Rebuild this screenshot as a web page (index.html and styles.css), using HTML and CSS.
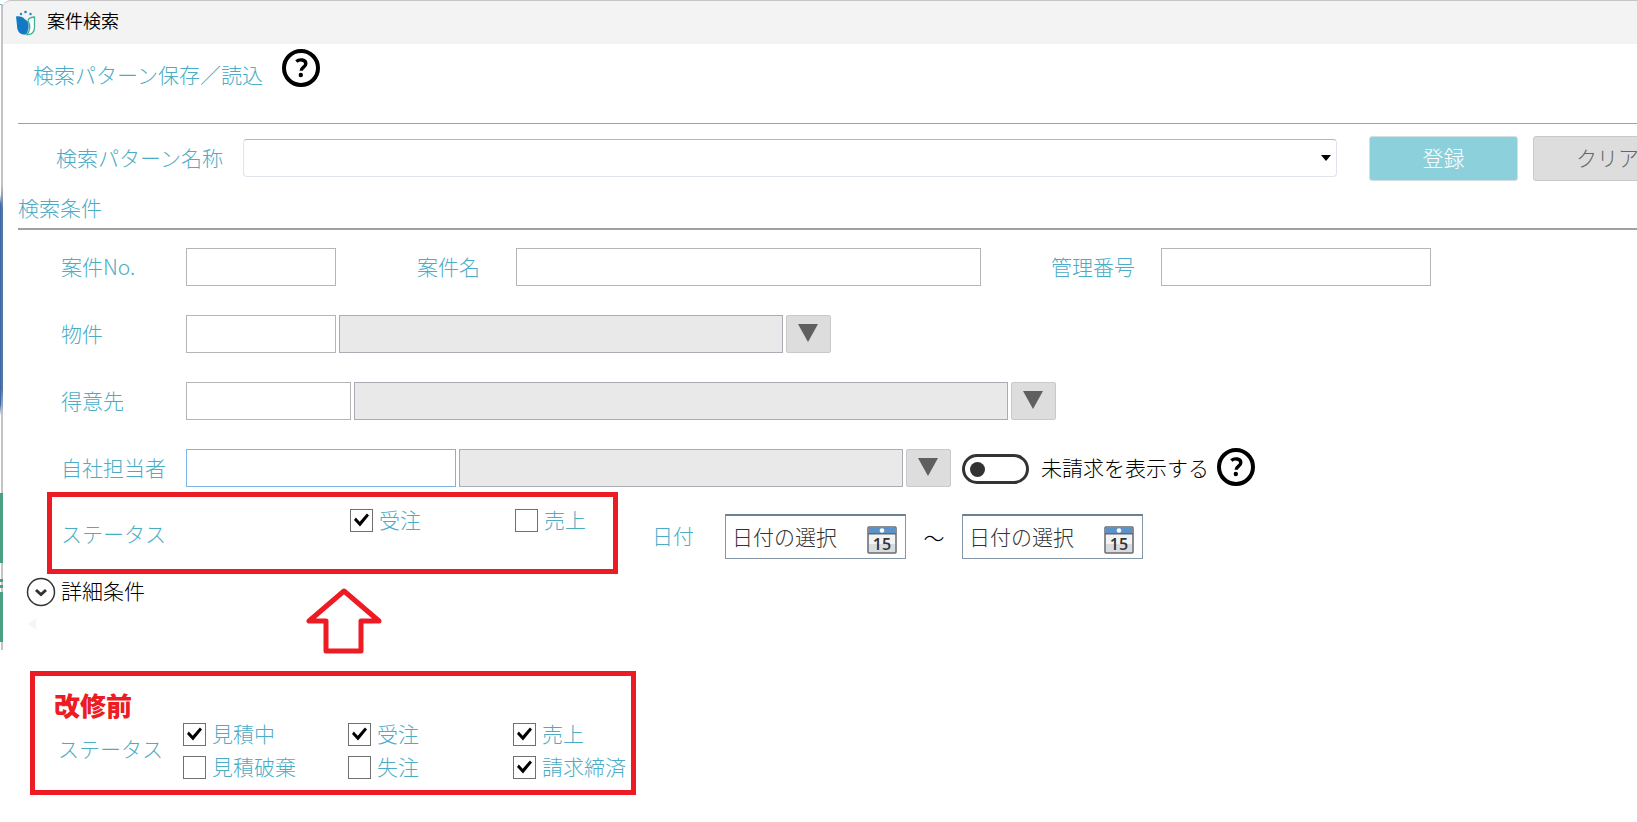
FILE: index.html
```
<!DOCTYPE html>
<html lang="ja">
<head>
  <meta charset="UTF-8">
  <title>案件検索</title>
  <link rel="stylesheet" href="styles.css">
</head>
<body>
  <svg class="defs">
    <symbol id="help" viewBox="0 0 38 38">
      <circle cx="19" cy="19" r="17" fill="#fff" stroke="#000" stroke-width="4"/>
      <path d="M14.300 12.500c3.400-2.800 9.500-1.900 9.500 2.200 0 3.300-4.600 3.500-4.600 7.100" fill="none" stroke="#000" stroke-width="3.400"/>
      <circle cx="18.800" cy="26" r="2.200" fill="#000"/>
    </symbol>
    <symbol id="calendar" viewBox="0 0 30 28">
      <rect x="1" y="1" width="28" height="26" rx="1" fill="#f1f3f4" stroke="#66696c" stroke-width="1.500"/>
      <rect x="2" y="18" width="26" height="8" fill="#d9dcdf"/>
      <rect x="2" y="2" width="26" height="5" fill="#5b93c9"/>
      <rect x="1" y="7" width="28" height="1.500" fill="#66696c"/>
      <circle cx="15" cy="4.500" r="2.300" fill="#fff"/>
      <text x="15" y="24" text-anchor="middle" class="calendar-day">15</text>
    </symbol>
    <symbol id="down" viewBox="0 0 20 18">
      <path d="M0 0h20L10 18z" fill="#5f5f5f"/>
    </symbol>
  </svg>

  <div class="edge"></div>

  <div class="window">
    <header class="titlebar">
      <svg class="logo" width="20" height="26" viewBox="0 0 20 26">
        <circle cx="5" cy="4" r="1.200" fill="#2083c4"/>
        <circle cx="9.500" cy="2" r="1.300" fill="#2083c4"/>
        <circle cx="14.500" cy="4" r="1.200" fill="#2083c4"/>
        <path d="M18.500 7c-4 .3-6.500 2-6.500 4 3 4 2 10-1 13.500 5 .5 7.500-2.500 7.500-7.500z" fill="#fff" stroke="#3cb392" stroke-width="1.300"/>
        <path d="M0 6.500c4-.5 7 .5 8.500 2.500 4.500 2 6 9 1.500 15.500-6 .5-9-3-9-9z" fill="#1479c3"/>
      </svg>
      <h1 class="title">案件検索</h1>
    </header>

    <div class="pattern-head">
      <h2 class="heading">検索パターン保存／読込</h2>
      <button class="help" aria-label="ヘルプ"><svg width="38" height="38"><use href="#help"/></svg></button>
    </div>

    <div class="pattern-row">
      <label for="pattern">検索パターン名称</label>
      <div class="combo">
        <select id="pattern"><option></option></select>
        <svg class="combo-arrow" width="10" height="6" viewBox="0 0 10 6"><path d="M0 0h10L5 6z"/></svg>
      </div>
      <button class="btn btn-primary">登録</button>
      <button class="btn">クリア</button>
    </div>

    <h2 class="heading heading-cond">検索条件</h2>

    <form class="conditions">
      <div class="row">
        <label class="name" for="no">案件No.</label>
        <input class="w-s" type="text" id="no">
        <label class="name name-matter" for="matter">案件名</label>
        <input class="w-l" type="text" id="matter">
        <label class="name name-control" for="control">管理番号</label>
        <input class="w-m" type="text" id="control">
      </div>
      <div class="row">
        <label class="name" for="property">物件</label>
        <input class="w-s" type="text" id="property">
        <input class="w-ref" type="text" aria-label="物件名" readonly>
        <button type="button" class="pick" aria-label="物件を選択"><svg width="20" height="18"><use href="#down"/></svg></button>
      </div>
      <div class="row">
        <label class="name" for="client">得意先</label>
        <input class="w-c" type="text" id="client">
        <input class="w-xl" type="text" aria-label="得意先名" readonly>
        <button type="button" class="pick" aria-label="得意先を選択"><svg width="20" height="18"><use href="#down"/></svg></button>
      </div>
      <div class="row">
        <label class="name" for="staff">自社担当者</label>
        <input class="w-m active" type="text" id="staff">
        <input class="w-ref" type="text" aria-label="担当者名" readonly>
        <button type="button" class="pick" aria-label="担当者を選択"><svg width="20" height="18"><use href="#down"/></svg></button>
        <label class="switch"><input type="checkbox" class="toggle">未請求を表示する</label>
        <button type="button" class="help" aria-label="ヘルプ"><svg width="38" height="38"><use href="#help"/></svg></button>
      </div>
    </form>

    <div class="status-row">
      <div class="status-now">
        <span class="status-label">ステータス</span>
        <label class="check"><input type="checkbox" checked>受注</label>
        <label class="check"><input type="checkbox">売上</label>
      </div>
      <div class="dates">
        <label class="date-label" for="from">日付</label>
        <div class="date">
          <input type="text" id="from" placeholder="日付の選択">
          <button aria-label="カレンダー"><svg width="30" height="28"><use href="#calendar"/></svg></button>
        </div>
        <span class="tilde">～</span>
        <div class="date">
          <input type="text" aria-label="日付(終了)" placeholder="日付の選択">
          <button aria-label="カレンダー"><svg width="30" height="28"><use href="#calendar"/></svg></button>
        </div>
      </div>
    </div>

    <div class="detail-row">
      <div>
        <button class="detail">
          <svg width="30" height="30" viewBox="0 0 30 30" fill="none" stroke="#333">
            <circle cx="15" cy="15" r="13.500" stroke-width="1.500"/>
            <path d="M10 13l5 4.500 5-4.500" stroke-width="3"/>
          </svg>
          <span>詳細条件</span>
        </button>
        <svg class="scroll-left" width="8" height="12" viewBox="0 0 8 12"><path d="M8 0v12L0 6z" fill="#f5f5f5"/></svg>
      </div>
      <svg class="arrow-up" width="76" height="66" viewBox="0 0 76 66">
        <path d="M38 3L3 33h17v30h35V33h18z" fill="#fff" stroke="#ed1c24" stroke-width="5" stroke-linejoin="round"/>
      </svg>
    </div>

    <section class="before">
      <h2 class="before-title">改修前</h2>
      <div class="before-body">
        <span class="before-label">ステータス</span>
        <div class="checks">
          <label class="check"><input type="checkbox" checked>見積中</label>
          <label class="check"><input type="checkbox" checked>受注</label>
          <label class="check"><input type="checkbox" checked>売上</label>
          <label class="check"><input type="checkbox">見積破棄</label>
          <label class="check"><input type="checkbox">失注</label>
          <label class="check"><input type="checkbox" checked>請求締済</label>
        </div>
      </div>
    </section>
  </div>
</body>
</html>
```
FILE: styles.css
```
* {
  box-sizing: border-box;
}
body {
  margin: 0;
  position: relative;
  overflow: hidden;
  background: #fff;
  color: #4bacc6;
  font: 300 21px/30px "Noto Sans CJK JP", sans-serif;
}
h1, h2 {
  margin: 0;
  font-size: inherit;
  font-weight: inherit;
}
button, input, select {
  margin: 0;
  padding: 0;
  font: inherit;
  color: inherit;
  border: 0;
  background: none;
}
svg {
  display: block;
  flex: none;
}
.defs {
  display: none;
}
.calendar-day {
  font: 600 16px "Open Sans", sans-serif;
  fill: #333;
}

/* 背後のウィンドウが見える左端 */
.edge {
  position: absolute;
  top: 4px;
  left: 0;
  width: 3px;
  height: 646px;
  background: linear-gradient(#4bacc6 1px, #fff 1px 190px, #3a68a8 200px 400px, #fff 412px 489px, #4a9f80 489px 559px, #fff 559px 575px, #4a9f80 575px 578px, #fff 578px 581px, #4a9f80 581px 584px, #fff 584px 588px, #4a9f80 588px 638px, #fff 638px);
}
.edge::after {
  content: "";
  position: absolute;
  top: 0;
  left: 1px;
  width: 2px;
  height: 646px;
  background: linear-gradient(#c4c4c4 180px, #56759f 205px 385px, #c4c4c4 410px 489px, #4a9f80 489px 559px, #c4c4c4 559px 575px, #4a9f80 575px 578px, #c4c4c4 578px 581px, #4a9f80 581px 584px, #c4c4c4 584px 588px, #4a9f80 588px 638px, #c4c4c4 638px);
}

.window {
  position: relative;
  margin-left: 3px;
}
.titlebar {
  display: flex;
  align-items: center;
  height: 44px;
  padding: 0 13px;
  gap: 11px;
  border-top: 1px solid #c4c4c4;
  border-top-left-radius: 8px;
  background: #f3f3f3;
}
.title {
  padding-bottom: 5px;
  color: #000;
  font-size: 18px;
  font-weight: 350;
}

.pattern-head {
  display: flex;
  align-items: flex-start;
  gap: 19px;
  height: 80px;
  margin-left: 15px;
  padding: 5px 0 0 15px;
  border-bottom: 1px solid #a0a0a0;
}
.pattern-head .heading {
  padding-top: 10px;
}
.pattern-row {
  display: flex;
  align-items: center;
  height: 68px;
  margin: 0 -45px 0 53px;
}
.pattern-row label {
  padding-bottom: 3px;
}
.combo {
  position: relative;
  flex: 1;
  margin: 0 32px 0 20px;
}
.combo select {
  display: block;
  width: 100%;
  height: 38px;
  appearance: none;
  border: 1px solid #dfe3ec;
  border-top-color: #b4b4bc;
  border-radius: 4px;
  background: #fff;
}
.combo-arrow {
  position: absolute;
  top: 16px;
  right: 6px;
}
.btn {
  width: 149px;
  height: 45px;
  margin-right: 15px;
  padding-bottom: 3px;
  border: 1px solid #c9c9c9;
  border-radius: 3px;
  background: #ddd;
  color: #666;
}
.btn:last-child {
  margin-right: 0;
}
.btn-primary {
  border-color: #d3dfe2;
  background: #8bd0db;
  color: #fff;
}
.heading-cond {
  height: 38px;
  margin-left: 15px;
  border-bottom: 2px solid #a0a0a0;
}

.conditions {
  display: flex;
  flex-direction: column;
  gap: 29px;
  padding: 18px 0 0 58px;
}
.row {
  display: flex;
  align-items: center;
  gap: 3px;
  height: 38px;
}
.row input[type="text"] {
  height: 38px;
  border: 1px solid #b5b5b5;
  background: #fff;
}
.row input[readonly] {
  border-color: #ababb3;
  background: #e9e9e9;
}
.row input.active {
  border-color: #7eb4ea;
}
.name {
  width: 122px;
  padding-bottom: 3px;
}
.name-matter {
  width: 96px;
  margin-left: 78px;
}
.name-control {
  width: 107px;
  margin-left: 67px;
}
.w-s { width: 150px; }
.w-c { width: 165px; }
.w-m { width: 270px; }
.w-ref { width: 444px; }
.w-l { width: 465px; }
.w-xl { width: 654px; }
.pick {
  display: flex;
  justify-content: center;
  width: 45px;
  height: 38px;
  padding: 8px 2px 0 0;
  border: 1px solid #c9c9c9;
  border-radius: 2px;
  background: #ddd;
}
.switch {
  display: flex;
  align-items: center;
  gap: 12px;
  margin: 0 5px 0 8px;
  padding-bottom: 2px;
  color: #000;
}
.toggle {
  width: 67px;
  height: 30px;
  margin-top: 3px;
  padding: 5px;
  appearance: none;
  border: 3px solid #333;
  border-radius: 15px;
}
.toggle::before {
  content: "";
  display: block;
  width: 15px;
  height: 15px;
  border-radius: 50%;
  background: #333;
}
.row .help {
  padding-bottom: 2px;
}

.status-row {
  display: flex;
  align-items: flex-start;
  margin: 5px 0 0 44px;
}
.status-now {
  display: flex;
  width: 571px;
  height: 82px;
  padding-left: 9px;
  border: 5px solid #ed1c24;
}
.status-label {
  flex: none;
  width: 289px;
  padding-top: 21px;
}
.status-now .check {
  flex: none;
  width: 165px;
  margin-top: 7px;
}
.check {
  display: flex;
  align-items: center;
  gap: 6px;
  height: 30px;
}
.check input {
  width: 23px;
  height: 23px;
  margin-top: 2px;
  padding: 3px;
  appearance: none;
  border: 1px solid #707070;
  background: #fff;
}
.check input:checked::before {
  content: "";
  display: block;
  width: 15px;
  height: 15px;
  background: #000;
  clip-path: polygon(0 50%, 12% 34%, 38% 62%, 86% 6%, 100% 20%, 40% 94%);
}
.dates {
  display: flex;
  align-items: center;
  margin: 22px 0 0 34px;
}
.date-label {
  width: 73px;
  padding-bottom: 3px;
}
.date {
  display: flex;
  width: 181px;
  height: 45px;
  padding-left: 6px;
  border: 1px solid #8496a5;
  border-top: 2px solid #6c8191;
}
.date input {
  flex: 1;
  min-width: 0;
  padding-bottom: 3px;
  color: #333;
}
.date input::placeholder {
  color: #333;
  opacity: 1;
}
.date button {
  padding: 6px 8px 0 0;
}
.tilde {
  width: 56px;
  text-align: center;
  color: #000;
}

.detail-row {
  display: flex;
  align-items: flex-start;
  height: 97px;
  padding: 0 0 0 23px;
}
.detail {
  display: flex;
  align-items: center;
  gap: 5px;
  padding-top: 1px;
  color: #000;
}
.detail span {
  padding-bottom: 3px;
}
.scroll-left {
  margin: 10px 0 0 2px;
}
.arrow-up {
  margin: 14px 0 0 161px;
}

.before {
  width: 606px;
  margin-left: 27px;
  padding: 16px 0 9px 19px;
  border: 5px solid #ed1c24;
}
.before-title {
  color: #ed1c24;
  font-size: 26px;
  line-height: 26px;
  font-weight: 900;
}
.before-body {
  display: flex;
}
.before-label {
  width: 129px;
  padding: 15px 0 0 4px;
}
.checks {
  display: grid;
  grid-template-columns: 165px 165px auto;
  row-gap: 3px;
}
```
